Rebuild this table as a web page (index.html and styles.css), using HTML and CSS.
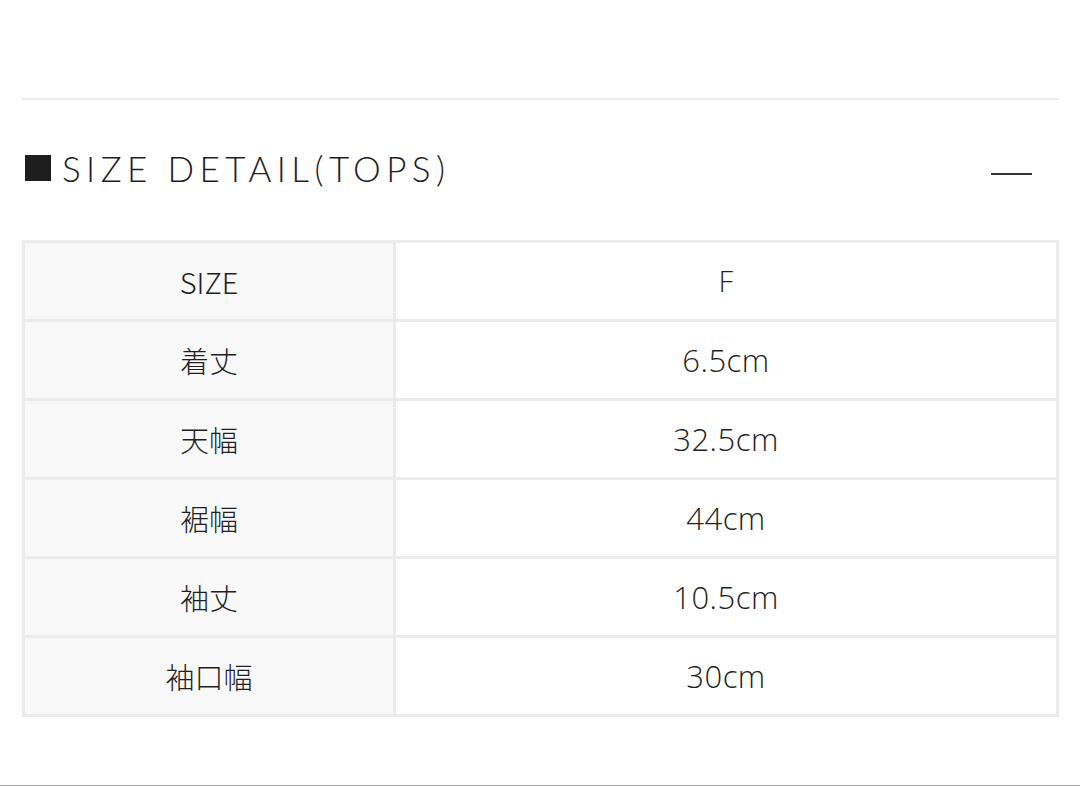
FILE: index.html
```html
<!DOCTYPE html>
<html lang="ja">
<head>
<meta charset="utf-8">
<title>SIZE DETAIL</title>
<link rel="stylesheet" href="styles.css">
</head>
<body>
<div class="page">
  <main class="content">
    <hr class="divider">
    <div class="section-head">
      <h2 class="section-title"><span class="square"></span>SIZE DETAIL(TOPS)</h2>
      <span class="minus"></span>
    </div>
    <table class="size-table">
      <tr><th>SIZE</th><td class="head-val">F</td></tr>
      <tr><th>着丈</th><td>6.5cm</td></tr>
      <tr><th>天幅</th><td>32.5cm</td></tr>
      <tr><th>裾幅</th><td>44cm</td></tr>
      <tr><th>袖丈</th><td>10.5cm</td></tr>
      <tr><th>袖口幅</th><td>30cm</td></tr>
    </table>
  </main>
  <div class="bottom-line"></div>
</div>
</body>
</html>
```

FILE: styles.css
```css
html, body {
  margin: 0;
  padding: 0;
  background: #ffffff;
}

.page {
  min-height: 786px;
  display: flex;
  flex-direction: column;
}

.content {
  padding: 98px 21px 0 22px;
}

.divider {
  margin: 0;
  border: 0;
  height: 2px;
  background: #ececec;
}

.section-head {
  height: 140px;
  display: flex;
  align-items: center;
  justify-content: space-between;
}

.section-title {
  margin: 0;
  display: flex;
  align-items: center;
  font-family: "Lato", "Noto Sans", sans-serif;
  font-weight: 300;
  font-size: 35px;
  letter-spacing: 5.4px;
  color: #1e1e1e;
  margin-top: -4px;
  margin-left: 3px;
}

.square {
  display: inline-block;
  width: 26px;
  height: 26px;
  background: #1e1e1e;
  margin-right: 11px;
}

.minus {
  display: block;
  width: 41px;
  height: 2px;
  background: #333333;
  margin-right: 27px;
  margin-top: 8px;
}

.size-table {
  border-spacing: 0;
  border-top: 3px solid #ebebeb;
  border-left: 3px solid #ebebeb;
  width: 1037px;
  table-layout: fixed;
}

.size-table th,
.size-table td {
  height: 76px;
  padding: 0;
  line-height: 36px;
  border-right: 3px solid #ebebeb;
  border-bottom: 3px solid #ebebeb;
  text-align: center;
  vertical-align: middle;
  color: #1f1f1f;
}

.size-table th {
  width: 368px;
  background: #f8f8f8;
  font-family: "Noto Sans CJK JP", sans-serif;
  font-weight: 300;
  font-size: 29px;
}

.size-table td {
  background: #ffffff;
  font-family: "Open Sans", "Noto Sans CJK JP", sans-serif;
  font-weight: 300;
  font-size: 31px;
  letter-spacing: 0.5px;
}

.size-table .head-val {
  font-size: 29px;
}

.bottom-line {
  margin-top: auto;
  height: 1px;
  background: #a8a8a8;
}
```
